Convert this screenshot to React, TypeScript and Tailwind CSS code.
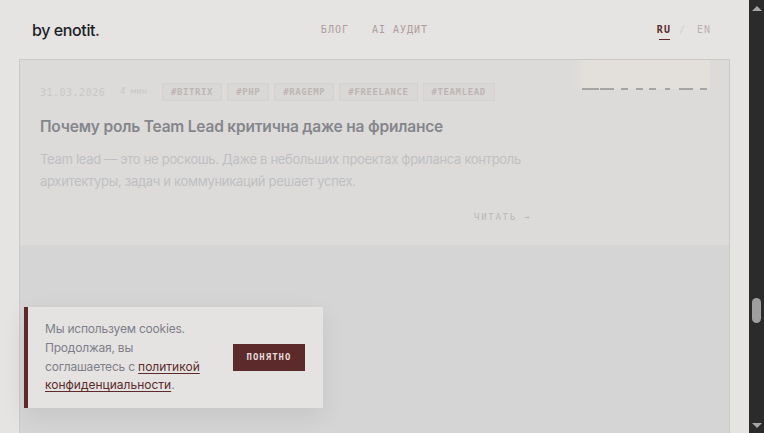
import React from 'react';

const mono = "font-['DejaVu_Sans_Mono',monospace]";
const sans = "font-['Inter','Noto_Sans',sans-serif]";
const tags = ['#BITRIX', '#PHP', '#RAGEMP', '#FREELANCE', '#TEAMLEAD'];
const dashes = [
  'w-[17px]',
  'ml-[1px] w-[14px]',
  'ml-[7px] w-[7px]',
  'ml-[8px] w-[7px]',
  'ml-[6px] w-[7px]',
  'ml-[9px] w-[5px]',
  'ml-[9px] w-[14px]',
  'ml-[7px] w-[7px]',
];

const Scrollbar = () => (
  <div className="flex h-[433px] w-[15px] shrink-0 flex-col items-center bg-[#2b2b2b] pt-[6px] pb-[5px]">
    <div className="h-0 w-0 border-x-[5px] border-b-[5px] border-x-transparent border-b-[#a6a6a6]" />
    <div className="mt-[287px] h-[25px] w-[9px] rounded-[5px] bg-[#9f9f9f]" />
    <div className="mt-auto h-0 w-0 border-x-[5px] border-t-[5px] border-x-transparent border-t-[#a6a6a6]" />
  </div>
);

const Header = () => (
  <header className="flex h-[59px] items-center justify-between pr-[38px] pl-[32px]">
    <div className={`${sans} w-[200px] text-[16px] font-medium tracking-[-0.4px] text-[#1c1d26]`}>
      by enotit<span className="text-[#5c2a2a]">.</span>
    </div>
    <nav className={`${mono} flex gap-[23px] text-[10px] tracking-[1px] text-[#b09c9c]`}>
      <a>БЛОГ</a>
      <a>AI АУДИТ</a>
    </nav>
    <div className={`${mono} flex w-[194px] justify-end gap-[11px] text-[10px] tracking-[1px]`}>
      <a className="relative mr-[-3px] font-bold text-[#5c2a2a]">
        RU
        <span className="absolute top-[17px] left-[2px] h-px w-[11px] bg-[#5c2a2a]" />
      </a>
      <span className="text-[#d4cfcf]">/</span>
      <a className="text-[#bcb0b0]">EN</a>
    </div>
  </header>
);

const Card = () => (
  <article className="relative h-[185px] bg-[#dcdbd9] pt-[23px] pl-[20px]">
    <div className={`${mono} flex h-[18px] items-center text-[10px] tracking-[0.5px] text-[#c9c8c6]`}>
      <span className="w-[80px]">31.03.2026</span>
      <span className="w-[42px] text-[9px] tracking-[0px]">4 мин</span>
      <div className="flex gap-[5px]">
        {tags.map((t) => (
          <span
            key={t}
            className="h-[18px] border border-[#d4d3d1] bg-[#d9d8d6] px-[8px] text-[9px] leading-[16px] font-bold tracking-[0.6px] text-[#bdb5b5]"
          >
            {t}
          </span>
        ))}
      </div>
    </div>
    <h2 className={`${sans} mt-[14px] text-[15.5px] leading-[24px] font-semibold tracking-[-0.2px] text-[#85868c]`}>
      Почему роль Team Lead критична даже на фрилансе
    </h2>
    <p className={`${sans} mt-[9px] w-[490px] text-[13px] leading-[22px] tracking-[-0.3px] text-[#bfc0c3]`}>
      Team lead — это не роскошь. Даже в небольших проектах фриланса контроль архитектуры, задач и коммуникаций решает успех.
    </p>
    <div className={`${mono} mt-[19px] w-[491px] text-right text-[9px] tracking-[1.7px] text-[#bdb7b5]`}>
      ЧИТАТЬ →
    </div>
    <div className="absolute top-0 right-[19px] h-[29px] w-[138px] bg-linear-to-r from-[#dcdbd9] from-0% to-[#e3e0dc] to-10%">
      <div className="absolute top-[28px] left-[10px] flex">
        {dashes.map((w, i) => (
          <span key={i} className={`${w} h-[2px] bg-[#a6a5a4]`} />
        ))}
      </div>
    </div>
  </article>
);

const CookieBanner = () => (
  <div className="absolute top-[307px] left-[24px] flex h-[101px] w-[299px] items-center justify-between border-l-4 border-[#5c2a2a] bg-[#e4e3e1] pr-[18px] pl-[17px] shadow-[0_8px_24px_rgba(0,0,0,0.08)]">
    <p className={`${sans} w-[165px] text-[12px] leading-[18.75px] tracking-[-0.2px] text-[#7e7f8a]`}>
      Мы используем cookies. Продолжая, вы соглашаетесь с{' '}
      <a className="tracking-[0px] text-[#5c2a2a] underline underline-offset-2">политикой конфиденциальности</a>.
    </p>
    <button className={`${mono} h-[27px] w-[72px] bg-[#5c2a2a] text-[9px] font-bold tracking-[1px] text-[#e4dcdc]`}>
      ПОНЯТНО
    </button>
  </div>
);

export default function App() {
  return (
    <div className="relative flex h-[433px] w-[764px] overflow-hidden bg-[#e5e4e2]">
      <main className="min-w-0 flex-1">
        <Header />
        <div className="ml-[19px] h-[374px] w-[711px] border-x border-t border-[#cbcac8] bg-[#d5d5d5]">
          <Card />
        </div>
      </main>
      <Scrollbar />
      <CookieBanner />
    </div>
  );
}
